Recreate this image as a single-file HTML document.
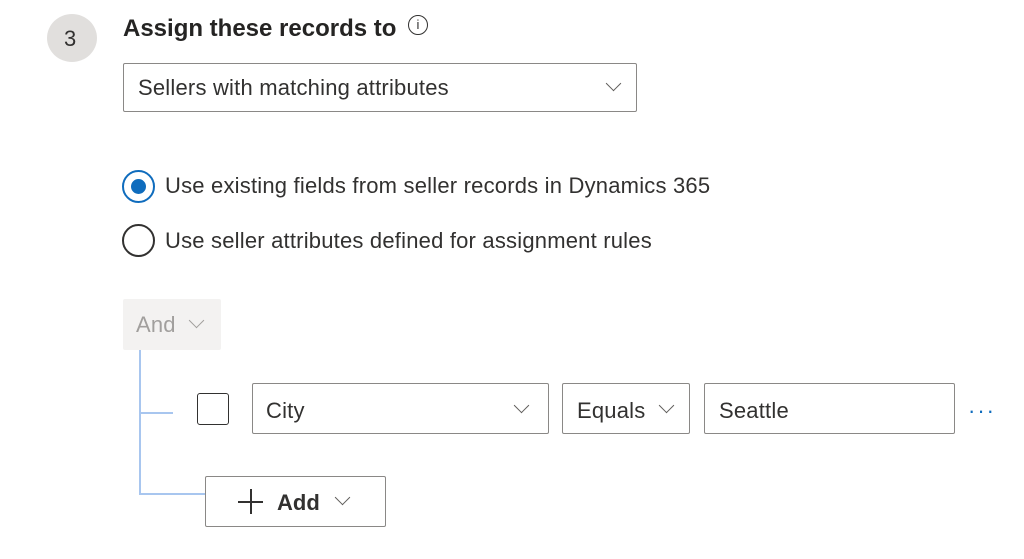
<!DOCTYPE html>
<html><head><style>
body{margin:0;width:1024px;height:559px;background:#fff;font-family:"Liberation Sans",sans-serif;color:#323130;position:relative;overflow:hidden}
.a{position:absolute}
.box{position:absolute;border:1px solid #8a8886;border-radius:2px;box-sizing:border-box;background:#fff}
.t{position:absolute;font-size:22px;letter-spacing:0.2px;white-space:nowrap}
.chev{position:absolute;width:10px;height:10px;border-right:1.3px solid #605e5c;border-bottom:1.3px solid #605e5c;transform:rotate(45deg)}
</style></head><body>
<div class="a" style="left:47px;top:14px;width:50px;height:48px;border-radius:50%;background:#e1dfdd"></div>
<div class="t" style="left:64px;top:26px;font-size:22px">3</div>
<div class="t" style="left:123px;top:15px;font-size:24px;letter-spacing:0;font-weight:bold;color:#252423">Assign these records to</div>
<div class="a" style="left:408px;top:15px;width:20px;height:20px;border:1.5px solid #323130;border-radius:50%;box-sizing:border-box;font-size:13px;text-align:center;line-height:17px">i</div>
<div class="box" style="left:123px;top:63px;width:514px;height:49px"></div>
<div class="t" style="left:138px;top:75px">Sellers with matching attributes</div>
<div class="chev" style="left:608px;top:78px"></div>
<div class="a" style="left:122px;top:170px;width:33px;height:33px;border:2px solid #0f6cbd;border-radius:50%;box-sizing:border-box"></div>
<div class="a" style="left:131px;top:179px;width:15px;height:15px;background:#0f6cbd;border-radius:50%"></div>
<div class="t" style="left:165px;top:173px">Use existing fields from seller records in Dynamics 365</div>
<div class="a" style="left:122px;top:224px;width:33px;height:33px;border:2px solid #323130;border-radius:50%;box-sizing:border-box"></div>
<div class="t" style="left:165px;top:228px">Use seller attributes defined for assignment rules</div>
<div class="a" style="left:123px;top:299px;width:98px;height:51px;background:#f3f2f1;border-radius:2px"></div>
<div class="t" style="left:136px;top:312px;color:#a19f9d">And</div>
<div class="chev" style="left:191px;top:315px;border-color:#a19f9d"></div>
<div class="a" style="left:139px;top:350px;width:1.5px;height:144px;background:#a8c6ef"></div>
<div class="a" style="left:139px;top:412px;width:34px;height:1.5px;background:#a8c6ef"></div>
<div class="a" style="left:139px;top:493px;width:67px;height:1.5px;background:#a8c6ef"></div>
<div class="a" style="left:197px;top:393px;width:32px;height:32px;border:1.5px solid #323130;border-radius:3px;box-sizing:border-box"></div>
<div class="box" style="left:252px;top:383px;width:297px;height:51px"></div>
<div class="t" style="left:266px;top:398px">City</div>
<div class="chev" style="left:516px;top:400px"></div>
<div class="box" style="left:562px;top:383px;width:128px;height:51px"></div>
<div class="t" style="left:577px;top:398px">Equals</div>
<div class="chev" style="left:661px;top:400px"></div>
<div class="box" style="left:704px;top:383px;width:251px;height:51px"></div>
<div class="t" style="left:719px;top:398px">Seattle</div>
<div class="t" style="left:968px;top:398px;color:#0f6cbd;letter-spacing:2px">···</div>
<div class="box" style="left:205px;top:476px;width:181px;height:51px"></div>
<div class="a" style="left:238px;top:501px;width:25px;height:1.5px;background:#323130"></div>
<div class="a" style="left:250px;top:489px;width:1.5px;height:25px;background:#323130"></div>
<div class="t" style="left:277px;top:490px;font-weight:bold;letter-spacing:0">Add</div>
<div class="chev" style="left:337px;top:492px"></div>
</body></html>
